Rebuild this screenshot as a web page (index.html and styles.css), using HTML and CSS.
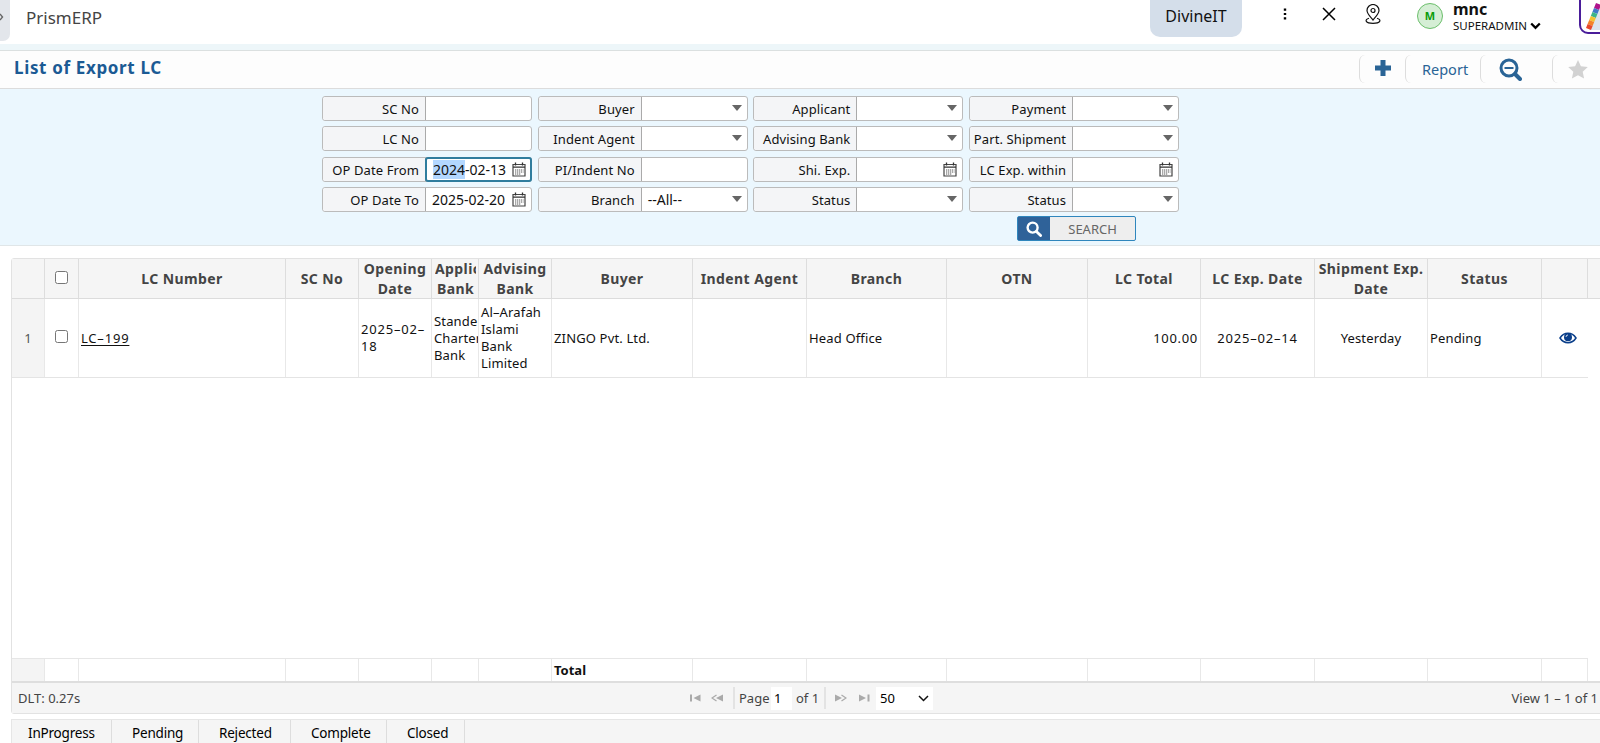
FILE: index.html
```html
<!DOCTYPE html>
<html lang="en">
<head>
    <meta charset="UTF-8">
    <meta name="viewport" content="width=device-width, initial-scale=1.0">
    <title>PrismERP - List of Export LC</title>
    <link rel="stylesheet" href="styles.css">
</head>
<body>
    <svg class="defs" width="0" height="0">
        <symbol id="calendar" viewBox="0 0 14 15">
            <path d="M1 2.500h12v11.500H1z" fill="#fff" stroke="#444" stroke-width="1.200"/>
            <path d="M1 5.200h12M3.500 .5v3M10.500 .5v3" stroke="#333" stroke-width="1.300"/>
            <path d="M3 8h8.500M3 10h8.500M3 12h6" stroke="#555" stroke-width="1" stroke-dasharray="1.300 .7"/>
        </symbol>
        <symbol id="glass" viewBox="0 0 16 16">
            <circle cx="6.600" cy="6.600" r="5" fill="none" stroke="currentColor" stroke-width="2.400"/>
            <path d="M10.400 10.400l4.200 4.200" stroke="currentColor" stroke-width="2.800" stroke-linecap="round"/>
        </symbol>
    </svg>

    <header class="topbar">
        <div class="side-toggle"><svg width="10" height="12" viewBox="0 0 10 12"><path d="M0 3l2.500 3L0 9" fill="none" stroke="#666" stroke-width="1.400"/></svg></div>
        <div class="brand">PrismERP</div>
        <div class="company">DivineIT</div>
        <svg class="dots" width="4" height="12" viewBox="0 0 4 12"><path d="M.8 .5h2.400v2.200H.8zM.8 4.900h2.400v2.200H.8zM.8 9.300h2.400v2.200H.8z"/></svg>
        <svg class="close" width="14" height="14" viewBox="0 0 14 14"><path d="M1 1l12 12M13 1L1 13" stroke="#000" stroke-width="1.500"/></svg>
        <svg class="pin" width="16" height="20" viewBox="0 0 16 20" fill="none" stroke="#111" stroke-width="1.200">
            <path d="M8 16C5 12.500 2 9.500 2 6.500a6 6 0 0 1 12 0C14 9.500 11 12.500 8 16z"/>
            <circle cx="8" cy="6.500" r="2"/>
            <path d="M4 14.300C-1 15.800 .5 19.300 8 19.300s9-3.500 4-5"/>
        </svg>
        <div class="avatar">M</div>
        <div class="user">
            <div class="user-name">mnc</div>
            <div class="user-role">SUPERADMIN <svg width="11" height="8" viewBox="0 0 11 8"><path d="M1.200 1.500l4.300 4.300 4.300-4.300" fill="none" stroke="#000" stroke-width="2.300"/></svg></div>
        </div>
        <div class="theme">
            <svg width="24" height="32" viewBox="0 0 24 32">
                <path d="M8 28L20 4h4v24z" fill="#dce4ee"/>
                <path d="M15 1l5 2-2 5-5-2z" fill="#b0158c"/>
                <path d="M13 6l5 2-1.600 4-5-2z" fill="#3e78c8"/>
                <path d="M11.400 10l5 2-1.600 4-5-2z" fill="#3bb58a"/>
                <path d="M9.800 14l5 2-1.600 4-5-2z" fill="#f2c230"/>
                <path d="M8.200 18l5 2-1.600 4-5-2z" fill="#f4832a"/>
                <path d="M6.600 22l5 2-1.600 4-5-2z" fill="#e8482c"/>
            </svg>
        </div>
    </header>

    <div class="titlebar">
        <h1>List of Export LC</h1>
        <div class="tool tool-add"><svg width="18" height="18" viewBox="0 0 18 18"><path d="M9 1v16M1 9h16" stroke="#2a6496" stroke-width="5"/></svg></div>
        <div class="tool tool-report">Report</div>
        <div class="tool tool-zoom"><svg width="23" height="23" viewBox="0 0 23 23" fill="none" stroke="#2a6496"><circle cx="10" cy="10" r="8" stroke-width="3"/><path d="M16 16l5 5" stroke-width="4" stroke-linecap="round"/><path d="M5.500 10h9" stroke-width="2"/></svg></div>
        <div class="tool tool-star"><svg width="20" height="19" viewBox="0 0 20 19"><path d="M10 0l2.900 6.300 6.900.8-5.100 4.700 1.400 6.800L10 15.200l-6.100 3.400 1.400-6.800L.2 7.100l6.900-.8z" fill="#d2d2d2"/></svg></div>
    </div>

    <form class="filters">
        <div class="field"><label>SC No</label><div class="value"></div></div>
        <div class="field"><label>Buyer</label><div class="value"><i class="caret"></i></div></div>
        <div class="field"><label>Applicant</label><div class="value"><i class="caret"></i></div></div>
        <div class="field"><label>Payment</label><div class="value"><i class="caret"></i></div></div>

        <div class="field"><label>LC No</label><div class="value"></div></div>
        <div class="field"><label>Indent Agent</label><div class="value"><i class="caret"></i></div></div>
        <div class="field"><label>Advising Bank</label><div class="value"><i class="caret"></i></div></div>
        <div class="field"><label>Part. Shipment</label><div class="value"><i class="caret"></i></div></div>

        <div class="field"><label>OP Date From</label><div class="value focus"><span><mark>2024</mark>-02-13</span><svg class="cal"><use href="#calendar"/></svg></div></div>
        <div class="field"><label>PI/Indent No</label><div class="value"></div></div>
        <div class="field"><label>Shi. Exp.</label><div class="value"><svg class="cal"><use href="#calendar"/></svg></div></div>
        <div class="field"><label>LC Exp. within</label><div class="value"><svg class="cal"><use href="#calendar"/></svg></div></div>

        <div class="field"><label>OP Date To</label><div class="value"><span>2025-02-20</span><svg class="cal"><use href="#calendar"/></svg></div></div>
        <div class="field"><label>Branch</label><div class="value"><span class="option">--All--</span><i class="caret"></i></div></div>
        <div class="field"><label>Status</label><div class="value"><i class="caret"></i></div></div>
        <div class="field"><label>Status</label><div class="value"><i class="caret"></i></div></div>

        <button type="button" class="search"><span class="search-icon"><svg width="16" height="16"><use href="#glass"/></svg></span><span class="search-text">SEARCH</span></button>
    </form>

    <div class="grid">
        <div class="row head">
            <div></div>
            <div><input type="checkbox"></div>
            <div>LC Number</div>
            <div>SC No</div>
            <div>Opening Date</div>
            <div class="clip"><span>Applicant<br>Bank</span></div>
            <div>Advising Bank</div>
            <div>Buyer</div>
            <div>Indent Agent</div>
            <div>Branch</div>
            <div>OTN</div>
            <div>LC Total</div>
            <div>LC Exp. Date</div>
            <div>Shipment Exp. Date</div>
            <div>Status</div>
            <div></div>
            <div></div>
        </div>
        <div class="row data">
            <div class="num">1</div>
            <div class="center"><input type="checkbox"></div>
            <div class="code"><a href="#">LC–199</a></div>
            <div></div>
            <div class="date">2025–02–<br>18</div>
            <div>Standerd Chartered Bank</div>
            <div>Al–Arafah Islami Bank Limited</div>
            <div>ZINGO Pvt. Ltd.</div>
            <div></div>
            <div>Head Office</div>
            <div></div>
            <div class="right">100.00</div>
            <div class="center date">2025–02–14</div>
            <div class="center">Yesterday</div>
            <div>Pending</div>
            <div class="center eye"><svg width="18" height="12" viewBox="0 0 18 12"><path d="M1 6c4-6.300 12-6.300 16 0-4 6.300-12 6.300-16 0z" fill="#fff" stroke="#0b3f8a" stroke-width="1.500"/><circle cx="9" cy="5.300" r="4" fill="#0b3f8a"/><path d="M7 5a2 2 0 0 1 2-2" fill="none" stroke="#fff" stroke-width=".8"/></svg></div>
        </div>
        <div class="space"></div>
        <div class="row total">
            <div class="num"></div><div></div><div></div><div></div><div></div><div></div><div></div>
            <div>Total</div>
            <div></div><div></div><div></div><div></div><div></div><div></div><div></div><div></div>
        </div>
        <div class="pager">
            <div class="dlt">DLT: 0.27s</div>
            <div class="pages">
                <svg class="first" width="11" height="8" viewBox="0 0 11 8"><path d="M0 .5h2v7H0zM10.500 .5v7L3.500 4z"/></svg>
                <svg class="prev" width="12" height="8" viewBox="0 0 12 8"><path d="M12 .5v7L5 4z"/><path d="M5.500 1L1 4l4.500 3" fill="none" stroke="#aaa" stroke-width="1.300"/></svg>
                <i class="sep"></i>
                <span class="page">Page</span>
                <span class="page-no">1</span>
                <span class="of">of 1</span>
                <i class="sep"></i>
                <svg class="next" width="12" height="8" viewBox="0 0 12 8"><path d="M0 .5v7L7 4z"/><path d="M6.500 1L11 4 6.500 7" fill="none" stroke="#aaa" stroke-width="1.300"/></svg>
                <svg class="last" width="11" height="8" viewBox="0 0 11 8"><path d="M8.500 .5h2v7h-2zM0 .5v7L7 4z"/></svg>
                <span class="size">50<svg width="11" height="7" viewBox="0 0 11 7"><path class="chevron" d="M1 1l4.500 4.500L10 1"/></svg></span>
            </div>
            <div class="view">View 1 – 1 of 1</div>
        </div>
    </div>

    <nav class="tabs">
        <a class="tab-progress">InProgress</a>
        <a class="tab-pending">Pending</a>
        <a class="tab-rejected">Rejected</a>
        <a class="tab-complete">Complete</a>
        <a class="tab-closed">Closed</a>
    </nav>
</body>
</html>
```
FILE: styles.css
```css
* {
    box-sizing: border-box;
}
body {
    margin: 0;
    width: 1600px;
    height: 743px;
    overflow: hidden;
    background: #fff;
    color: #111;
    font-family: "Lucida Grande", "Noto Sans", sans-serif;
    font-size: 13px;
    display: flex;
    flex-direction: column;
}
svg {
    display: block;
    flex: none;
}
.defs {
    position: absolute;
}

/* top bar */
.topbar {
    height: 44px;
    flex: none;
    display: flex;
    align-items: flex-start;
    overflow: hidden;
}
.topbar > * {
    flex: none;
}
.side-toggle {
    width: 10px;
    height: 41px;
    padding-top: 11px;
    background: #e3e6eb;
    border-radius: 0 0 7px 0;
}
.brand {
    width: 1124px;
    margin: 5px 0 0 16px;
    font-size: 17px;
    line-height: 26px;
    color: #444;
}
.company {
    width: 92px;
    height: 37px;
    line-height: 32px;
    text-align: center;
    font-size: 16px;
    background: #d4deea;
    border-radius: 0 0 10px 10px;
}
.dots {
    margin: 8px 0 0 41px;
}
.close {
    margin: 7px 0 0 35px;
}
.pin {
    margin: 4px 0 0 29px;
}
.avatar {
    width: 26px;
    height: 26px;
    margin: 3px 0 0 36px;
    border: 1px solid #6cbf6c;
    border-radius: 50%;
    background: #d5eed5;
    color: #0a9c0a;
    font-size: 11px;
    font-weight: bold;
    line-height: 24px;
    text-align: center;
}
.user {
    width: 126px;
    margin-left: 10px;
}
.user-name {
    font-size: 16px;
    font-weight: bold;
    line-height: 18px;
}
.user-role {
    display: flex;
    align-items: center;
    gap: 3px;
    font-size: 11.5px;
    line-height: 15px;
}
.theme {
    width: 40px;
    height: 46px;
    margin-top: -12px;
    padding-top: 12px;
    border: 2px solid #4a1d9a;
    border-radius: 9px;
}

/* title bar */
.titlebar {
    height: 45px;
    flex: none;
    border-top: 6px solid #edf6f9;
    border-bottom: 1px solid #dcdcdc;
    box-shadow: inset 0 1px #dbe0e0;
    background: #fdfdfd;
    display: flex;
    align-items: center;
}
h1 {
    width: 1345px;
    margin: 0;
    padding: 0 0 3px 14px;
    font-size: 17px;
    line-height: 26px;
    letter-spacing: .65px;
    color: #1b5a94;
}
.tool {
    height: 28px;
    border-left: 1px solid #ddd;
    border-radius: 6px 0 0 6px;
    display: flex;
    align-items: center;
    color: #2a6496;
    font-size: 14.5px;
}
.tool-add {
    width: 46px;
    margin-left: 14px;
    padding: 0 0 2px 14px;
}
.tool-report {
    width: 75px;
    padding: 0 0 0 16px;
}
.tool-zoom {
    width: 72px;
    padding-left: 18px;
}
.tool-star {
    padding-left: 15px;
}

/* search filters */
.filters {
    height: 157px;
    flex: none;
    padding: 7px 0 0 322px;
    background: #ebf7fe;
    border-bottom: 1px solid #e0e6e8;
    display: grid;
    grid-template-columns: repeat(4, 210px);
    grid-template-rows: repeat(4, 25px);
    gap: 5.3px 5.7px;
    align-content: start;
}
.field {
    display: flex;
    border: 1px solid #bbb;
    border-radius: 3px;
    background: #fff;
}
.field label {
    width: 103px;
    padding-right: 6px;
    border-right: 1px solid #aaa;
    border-radius: 3px 0 0 3px;
    background: #f4f5f7;
    text-align: right;
    font-size: 13px;
    letter-spacing: .1px;
    line-height: 25px;
    white-space: nowrap;
}
.value {
    flex: 1;
    display: flex;
    align-items: center;
    padding: 1px 5px 0 6px;
    font-size: 14px;
    white-space: nowrap;
}
.focus {
    margin: -1px;
    padding-right: 4px;
    border: 2px solid #2f7d9e;
    border-radius: 3px;
}
mark {
    background: #b3d7ff;
    color: inherit;
}
.cal {
    width: 14px;
    height: 15px;
    margin-left: auto;
}
.caret {
    margin: -2px 0 0 auto;
    border: 5px solid transparent;
    border-top: 6px solid #666;
    border-bottom: 0;
}
.search {
    grid-column: 4;
    width: 119px;
    height: 25px;
    margin: -1px 0 0 48px;
    padding: 0;
    display: flex;
    border: 1px solid #2f86bd;
    border-radius: 2px;
    background: #eee;
}
.search-icon {
    width: 32px;
    height: 23px;
    background: #2f6299;
    color: #fff;
    display: flex;
    align-items: center;
    justify-content: center;
}
.search-text {
    flex: 1;
    line-height: 25px;
    color: #666;
    font-size: 13px;
    font-family: "Noto Sans", sans-serif;
}

/* grid */
.grid {
    width: 1600px;
    height: 456px;
    flex: none;
    margin: 12px 0 0 11px;
    border: 1px solid #e2e2e2;
    border-radius: 3px;
    display: flex;
    flex-direction: column;
}
.row {
    display: grid;
    grid-template-columns: 33px 34px 207px 73px 73px 47px 73px 141px 114px 140px 141px 113px 114px 113px 114px 46px 20px;
}
.row > div {
    display: flex;
    align-items: center;
    border-right: 1px solid #e8e8e8;
    padding: 0 2px;
    overflow: hidden;
}
.head {
    height: 40px;
    background: #f5f5f5;
    border-bottom: 1px solid #dcdcdc;
    color: #444;
    font-size: 14px;
    font-weight: bold;
    letter-spacing: .4px;
    line-height: 20px;
    text-align: center;
}
.head > div {
    justify-content: center;
    border-color: #ddd;
}
.head > .clip {
    justify-content: flex-start;
    padding-left: 3px;
}
.clip span {
    width: 41px;
    overflow: hidden;
}
input {
    width: 13px;
    height: 13px;
    margin: 0 0 3px;
}
.data {
    width: 1576px;
    height: 79px;
    border-bottom: 1px solid #e4e4e4;
    letter-spacing: .15px;
    line-height: 17px;
}
.row > .num {
    justify-content: center;
    background: #f4f4f4;
    color: #555;
}
.row > .center {
    justify-content: center;
    text-align: center;
}
.row > .right {
    justify-content: flex-end;
    letter-spacing: .7px;
}
.row > .date {
    letter-spacing: .8px;
    white-space: nowrap;
}
.row > .code {
    letter-spacing: .8px;
}
.data > .eye {
    padding-left: 7px;
    border: 0;
}
.data a {
    color: #111;
    text-underline-offset: 2px;
}
.space {
    flex: 1;
}
.total {
    width: 1576px;
    height: 23px;
    border-top: 1px solid #e6e6e6;
    font-weight: bold;
}
.pager {
    height: 32px;
    background: #f5f5f5;
    border-top: 2px solid #dedede;
    display: flex;
    align-items: center;
    color: #444;
}
.dlt {
    width: 678px;
    padding: 0 0 1px 6px;
}
.pages {
    display: flex;
    align-items: center;
    height: 23px;
}
.pages svg {
    fill: #aaa;
}
.pages .chevron {
    fill: none;
    stroke: #111;
    stroke-width: 1.5;
}
.prev {
    margin: 0 10px;
}
.sep {
    width: 2px;
    height: 22px;
    background: #e3e3e3;
}
.page {
    width: 31px;
    margin-left: 4px;
}
.page-no {
    width: 21px;
    height: 23px;
    margin-left: 1px;
    padding-left: 3px;
    line-height: 23px;
    background: #fff;
    color: #000;
}
.of {
    width: 28px;
    margin-left: 4px;
}
.next {
    margin: 0 12px 0 9px;
}
.size {
    width: 57px;
    height: 23px;
    margin-left: 6px;
    padding: 0 4px;
    background: #fff;
    color: #000;
    display: flex;
    align-items: center;
    justify-content: space-between;
}
.view {
    margin-left: auto;
    padding: 0 12px 1px 0;
}

/* status tabs */
.tabs {
    height: 24px;
    flex: none;
    margin: 5px 0 0 11px;
    border: 1px solid #e6e6e6;
    border-width: 1px 0 0 1px;
    background: #f5f5f5;
    display: flex;
}
.tabs a {
    padding-top: 3px;
    border-right: 1px solid #ddd;
    font-size: 13.5px;
    letter-spacing: -.2px;
    line-height: 20px;
    color: #000;
    text-indent: 16px;
}
.tab-progress {
    width: 100px;
}
.tab-pending {
    width: 87px;
}
.tab-rejected {
    width: 92px;
}
.tab-complete {
    width: 96px;
}
.tab-closed {
    width: 78px;
}
.tabs a:not(:first-child) {
    text-indent: 20px;
}
```
